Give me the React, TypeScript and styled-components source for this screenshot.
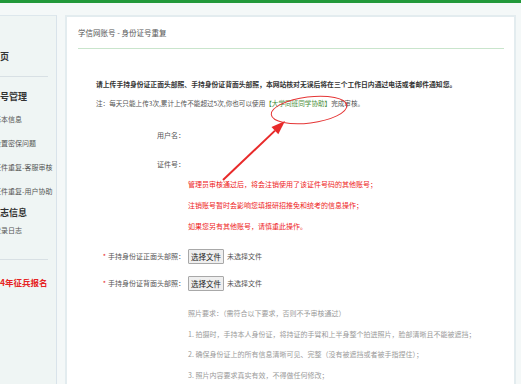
import React from "react"
import styled, { createGlobalStyle } from "styled-components"

const GlobalStyle = createGlobalStyle`
  html, body {
    margin: 0;
    padding: 0;
  }
  body {
    background: #f4f8f8;
    font-family: "Noto Sans CJK SC", "Noto Sans", sans-serif;
    overflow: hidden;
  }
`

const TopBar = styled.div`
  height: 3px;
  background: #22993a;
`

const Layout = styled.div`
  display: flex;
  align-items: flex-start;
  gap: 8px;
  margin-left: -20px;
  padding-top: 12px;
`

const Sidebar = styled.aside`
  width: 77px;
  flex: none;
  box-sizing: border-box;
  min-height: 380px;
  padding-top: 31px;
  background: #eff5f4;
  border-top: 1px solid #dde7ec;
  border-right: 1px solid #d9e3ea;
  overflow: hidden;
  white-space: nowrap;
`

const NavHeading = styled.div<{ $indent: number; $top?: number }>`
  padding-left: ${(p) => p.$indent}px;
  margin-top: ${(p) => p.$top ?? 0}px;
  line-height: 20px;
  font-size: 9px;
  font-weight: 700;
  color: #333;
`

const NavItem = styled.div<{ $h: number }>`
  padding-left: 14px;
  line-height: ${(p) => p.$h}px;
  font-size: 7px;
  color: #555;
`

const NavDivider = styled.div<{ $top: number }>`
  height: 1px;
  margin: ${(p) => p.$top}px 8px 0 20px;
  background: #d8e0e4;
`

const NavPromo = styled.div`
  margin-top: 12px;
  padding-left: 5px;
  line-height: 20px;
  font-size: 8.5px;
  font-weight: 700;
  color: #e62222;
`

const Panel = styled.main`
  position: relative;
  width: 451px;
  flex: none;
  box-sizing: border-box;
  min-height: 380px;
  background: #fff;
  border: 2px solid #e3ecef;
`

const PanelHeader = styled.div`
  padding: 8px 10px 0 11px;
`

const PanelTitle = styled.div`
  line-height: 16px;
  font-size: 7.5px;
  color: #555;
`

const HeaderRule = styled.div`
  margin-top: 7px;
  height: 1px;
  background: #c9e5cc;
`

const PanelBody = styled.div`
  padding: 27px 0 0 29px;
`

const Lead = styled.p`
  margin: 0;
  line-height: 16px;
  font-size: 6.8px;
  font-weight: 700;
  color: #333;
  white-space: nowrap;
`

const Note = styled.p`
  margin: 3px 0 0;
  line-height: 16px;
  font-size: 6.6px;
  color: #555;
  white-space: nowrap;
`

const GreenLink = styled.span`
  color: #4a8f3c;
`

const FormRow = styled.div<{ $top: number; $h?: number }>`
  display: grid;
  grid-template-columns: 89px auto;
  column-gap: 3px;
  align-items: center;
  margin-top: ${(p) => p.$top}px;
  min-height: ${(p) => p.$h ?? 16}px;
  font-size: 7px;
  white-space: nowrap;
`

const Label = styled.div`
  text-align: right;
  color: #555;
`

const Required = styled.span`
  color: #e62222;
  margin-right: 2px;
`

const Value = styled.div`
  display: flex;
  align-items: center;
  gap: 3px;
  color: #555;
`

const Lines = styled.div<{ $lh: number; $color: string }>`
  line-height: ${(p) => p.$lh}px;
  color: ${(p) => p.$color};
`

const FileButton = styled.button`
  box-sizing: border-box;
  height: 15px;
  width: 36px;
  padding: 0;
  font-family: inherit;
  font-size: 7.5px;
  color: #222;
  background: #efefef;
  border: 1px solid #a8a8a8;
  border-radius: 1px;
`

const Overlay = styled.svg`
  position: absolute;
  top: -2px;
  left: -2px;
  pointer-events: none;
  overflow: visible;
`

const navGroups = [
  { title: "账号管理", items: ["基本信息", "设置密保问题", "证件重复-客服审核", "证件重复-用户协助"], h: 24 },
  { title: "日志信息", items: ["登录日志"], h: 14 },
]

const notices = [
  "管理员审核通过后，将会注销使用了该证件号码的其他账号；",
  "注销账号暂时会影响您填报研招推免和统考的信息操作；",
  "如果您另有其他账号，请慎重此操作。",
]

const requirements = [
  "照片要求：（需符合以下要求，否则不予审核通过）",
  "1. 拍摄时，手持本人身份证，将持证的手臂和上半身整个拍进照片，脸部清晰且不能被遮挡；",
  "2. 确保身份证上的所有信息清晰可见、完整（没有被遮挡或者被手指捏住）；",
  "3. 照片内容要求真实有效，不得做任何修改；",
]

const uploads = [
  { label: "手持身份证正面头部照：", top: 11 },
  { label: "手持身份证背面头部照：", top: 11 },
]

export default function App() {
  return (
    <>
      <GlobalStyle />
      <TopBar />
      <Layout>
        <Sidebar>
          <NavHeading $indent={11}>首页</NavHeading>
          <NavDivider $top={9} />
          {navGroups.map((g, i) => (
            <div key={g.title}>
              <NavHeading $indent={11} $top={i === 0 ? 10 : 0}>
                {g.title}
              </NavHeading>
              {g.items.map((it) => (
                <NavItem key={it} $h={g.h}>
                  {it}
                </NavItem>
              ))}
            </div>
          ))}
          <NavDivider $top={22} />
          <NavPromo>2024年征兵报名</NavPromo>
        </Sidebar>

        <Panel>
          <PanelHeader>
            <PanelTitle>学信网账号 - 身份证号重复</PanelTitle>
            <HeaderRule />
          </PanelHeader>
          <PanelBody>
            <Lead>
              请上传手持身份证正面头部照、手持身份证背面头部照，本网站核对无误后将在三个工作日内通过电话或者邮件通知您。
            </Lead>
            <Note>
              注：每天只能上传3次,累计上传不能超过5次,你也可以使用
              <GreenLink>【大学同班同学协助】</GreenLink>完成审核。
            </Note>

            <FormRow $top={16}>
              <Label>用户名：</Label>
              <Value />
            </FormRow>
            <FormRow $top={13}>
              <Label>证件号：</Label>
              <Value />
            </FormRow>
            <FormRow $top={2}>
              <span />
              <Lines $lh={21} $color="#ee1c1c">
                {notices.map((n) => (
                  <div key={n}>{n}</div>
                ))}
              </Lines>
            </FormRow>

            {uploads.map((u) => (
              <FormRow key={u.label} $top={u.top}>
                <Label>
                  <Required>*</Required>
                  {u.label}
                </Label>
                <Value>
                  <FileButton type="button">选择文件</FileButton>
                  未选择文件
                </Value>
              </FormRow>
            ))}

            <FormRow $top={12}>
              <span />
              <Lines $lh={20.5} $color="#9a9a9a">
                {requirements.map((r) => (
                  <div key={r}>{r}</div>
                ))}
              </Lines>
            </FormRow>
          </PanelBody>

          <Overlay width="451" height="200" viewBox="0 0 451 200">
            <ellipse
              cx="244"
              cy="95"
              rx="38"
              ry="13"
              transform="rotate(-7 244 95)"
              fill="none"
              stroke="#e53535"
              strokeWidth="1"
            />
            <line x1="158" y1="165" x2="210" y2="115.6" stroke="#e82a2a" strokeWidth="2" />
            <polygon points="220,106 213.3,119.2 206.5,112" fill="#e82a2a" />
          </Overlay>
        </Panel>
      </Layout>
    </>
  )
}
